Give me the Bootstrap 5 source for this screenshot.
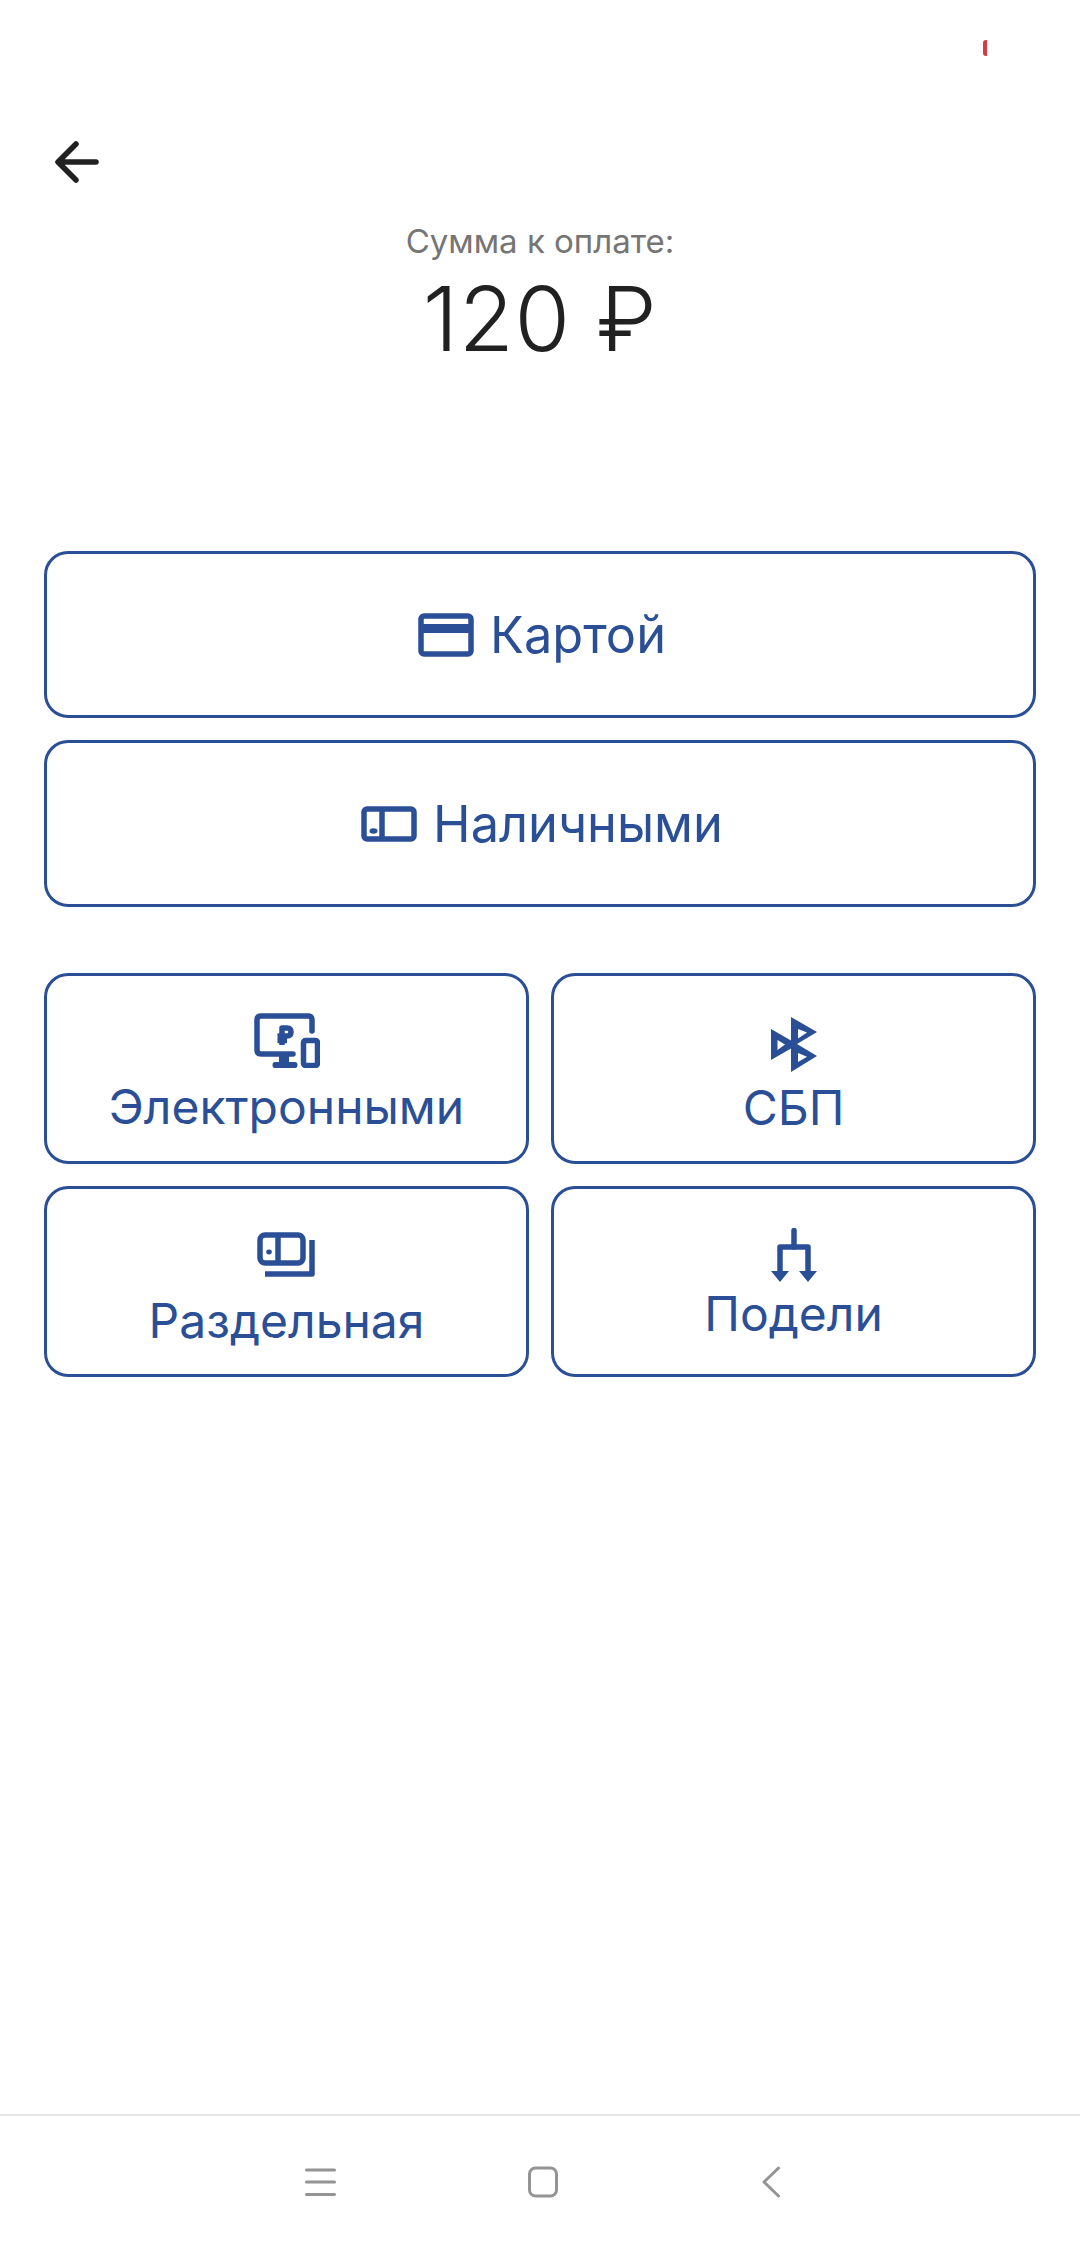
<!DOCTYPE html>
<html lang="ru">
<head>
    <meta charset="UTF-8">
    <title>Сумма к оплате</title>
    <meta name="viewport" content="width=device-width, initial-scale=1">
    <link href="https://cdn.jsdelivr.net/npm/bootstrap@5.3.3/dist/css/bootstrap.min.css" rel="stylesheet">
    <style>
        body { background: #fff; font-family: Inter, "Noto Sans", sans-serif; }
        .screen { position: relative; height: 2244px; overflow: hidden; }
        .rec-mark { position: absolute; left: 983px; top: 40px; width: 4px; height: 16px; background: #d23c42; border-radius: 3px 0 0 3px; }
        .back-link { display: block; width: 46px; height: 42px; margin: 141px 0 0 55px; }
        .sum-label { margin-top: 34px; font-size: 33px; line-height: 48px; color: #757575; }
        .sum-value { font-weight: 350; font-size: 90px; letter-spacing: .5px; line-height: 108px; color: #212121; }
        .pay-list { padding: 0 44px; margin-top: 178px; }
        .pay-btn { --bs-btn-border-width: 3px; --bs-btn-border-color: #2a4f96; --bs-btn-color: #2a4f96; --bs-btn-border-radius: 24px;
            --bs-btn-font-size: 48px; --bs-btn-line-height: 58px; --bs-btn-padding-x: 0; --bs-btn-padding-y: 0;
            --bs-btn-hover-color: #2a4f96; --bs-btn-hover-border-color: #2a4f96; --bs-btn-hover-bg: transparent;
            width: 100%; font-family: Inter, sans-serif; }
        .pay-wide { --bs-btn-font-size: 50.5px; height: 167px; margin-bottom: 22px; gap: 16px; padding-left: 4px; }
        .pay-tile { height: 191px; }
        .pay-row { --bs-gutter-x: 22px; --bs-gutter-y: 22px; margin-top: 44px; }
        .pay-tile svg { display: block; }
        .tile-monitor { padding-top: 37px; gap: 10px; }
        .tile-sbp { padding-top: 41px; gap: 7px; }
        .tile-split { padding-top: 43px; gap: 15px; }
        .tile-share { padding-top: 39px; gap: 3px; }
        .sys-nav { position: absolute; left: 0; right: 0; bottom: 0; height: 130px; border-top: 2px solid #e6e6e6; }
        .sys-nav svg { position: absolute; top: 50px; }
        .sys-menu { left: 305px; }
        .sys-home { left: 527px; }
        .sys-back { left: 761px; }
        svg .ic { fill: none; stroke: #2a4f96; stroke-width: 5.5; stroke-linejoin: round; }
        svg .fl { fill: #2a4f96; }
    </style>
</head>
<body>
<div class="screen d-flex flex-column">
    <span class="rec-mark"></span>

    <a class="back-link" href="#" aria-label="Назад">
        <svg width="46" height="42" viewBox="0 0 46 42"><path d="M41 21H5M21 3 3 21l18 18" fill="none" stroke="#212121" stroke-width="5.500" stroke-linecap="round" stroke-linejoin="round"/></svg>
    </a>

    <div class="text-center">
        <div class="sum-label">Сумма к оплате:</div>
        <div class="sum-value">120 ₽</div>
    </div>

    <div class="pay-list">
        <button type="button" class="btn pay-btn pay-wide d-flex align-items-center justify-content-center">
            <svg width="56" height="44" viewBox="0 0 56 44"><rect class="ic" x="3" y="3" width="50" height="38" rx="3"/><rect class="fl" x="2" y="11" width="52" height="9"/></svg>
            <span>Картой</span>
        </button>
        <button type="button" class="btn pay-btn pay-wide d-flex align-items-center justify-content-center">
            <svg width="56" height="36" viewBox="0 0 56 36"><rect class="ic" x="3" y="3" width="50" height="30" rx="3"/><path class="ic" d="M21 3v30"/><ellipse class="fl" cx="12.500" cy="25" rx="4" ry="2.800"/></svg>
            <span>Наличными</span>
        </button>

        <div class="row pay-row">
            <div class="col-6">
                <button type="button" class="btn pay-btn pay-tile tile-monitor d-flex flex-column align-items-center">
                    <svg width="66" height="55" viewBox="0 0 66 55">
                        <path class="ic" stroke-linecap="round" d="M58 18V7q0-4-4-4H7q-4 0-4 4V37q0 4 4 4H39"/>
                        <path class="fl" d="M25 41h10v8h6q2.500 0 2.500 3t-2.500 3H21q-2.500 0-2.500-3t2.500-3h4z"/>
                        <rect class="ic" x="49.500" y="27.500" width="14" height="25" rx="2"/>
                        <path class="ic" stroke-width="4.500" d="M28 32V15h5q4 0 4 4t-4 4H23.500M23.500 27.500H33"/>
                    </svg>
                    <span>Электронными</span>
                </button>
            </div>
            <div class="col-6">
                <button type="button" class="btn pay-btn pay-tile tile-sbp d-flex flex-column align-items-center">
                    <svg width="46" height="55" viewBox="0 0 46 55">
                        <path class="fl" fill-rule="evenodd" d="M20 0 46 15 26 27 46 39 20 55V31.500L0 43V12L20 23.500zM27 12V21.500L36 15.500zM27 36V45L36 39.700zM6.500 23V33L14 27.500z"/>
                    </svg>
                    <span>СБП</span>
                </button>
            </div>
            <div class="col-6">
                <button type="button" class="btn pay-btn pay-tile tile-split d-flex flex-column align-items-center">
                    <svg width="60" height="45" viewBox="0 0 60 45">
                        <rect class="ic" x="3" y="3" width="43" height="28" rx="5"/>
                        <path class="ic" stroke-width="4" d="M21 3v27"/>
                        <ellipse class="fl" cx="12" cy="20" rx="2.800" ry="2.400"/>
                        <path class="ic" stroke-width="6" d="M8 42H55V8"/>
                    </svg>
                    <span>Раздельная</span>
                </button>
            </div>
            <div class="col-6">
                <button type="button" class="btn pay-btn pay-tile tile-share d-flex flex-column align-items-center">
                    <svg width="46" height="54" viewBox="0 0 46 54">
                        <path class="ic" stroke-linecap="round" d="M23 2.500V19"/>
                        <path class="ic" stroke-width="6" d="M9 46V19H37V46"/>
                        <path class="fl" d="M0 43H18L9 54zM28 43H46L37 54z"/>
                    </svg>
                    <span>Подели</span>
                </button>
            </div>
        </div>
    </div>

    <nav class="sys-nav">
        <svg class="sys-menu" width="31" height="32" viewBox="0 0 31 32"><path d="M1.500 4h28M1.500 16h28M1.500 28.500h28" stroke="#949494" stroke-width="3" stroke-linecap="round"/></svg>
        <svg class="sys-home" width="32" height="32" viewBox="0 0 32 32"><rect x="2.500" y="2" width="27" height="28" rx="6" fill="none" stroke="#949494" stroke-width="3"/></svg>
        <svg class="sys-back" width="20" height="32" viewBox="0 0 20 32"><path d="M17.500 2 3 16l14.500 14" fill="none" stroke="#949494" stroke-width="3" stroke-linecap="round" stroke-linejoin="round"/></svg>
    </nav>
</div>
<script src="https://cdn.jsdelivr.net/npm/bootstrap@5.3.3/dist/js/bootstrap.bundle.min.js"></script>
</body>
</html>
